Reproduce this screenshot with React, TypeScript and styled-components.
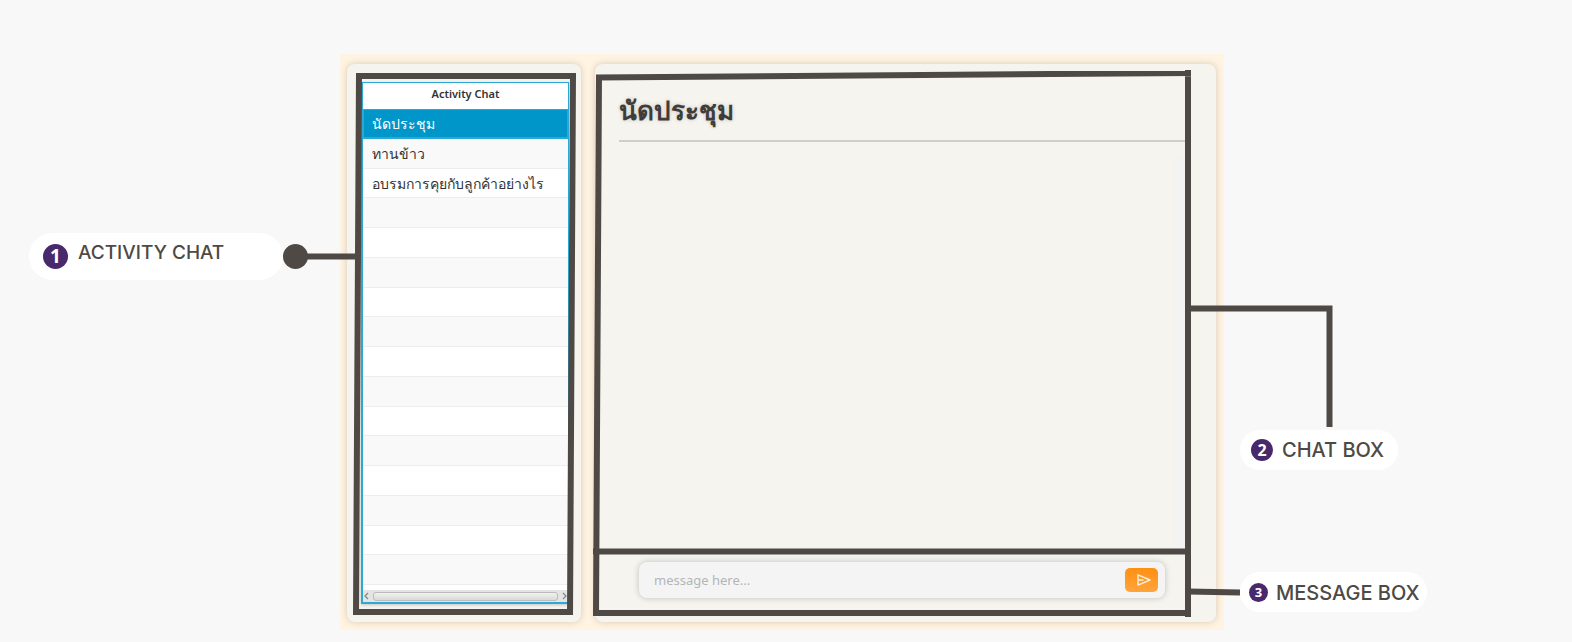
import React from "react";
import styled, { createGlobalStyle } from "styled-components";

const ink = "#4e4945";
const chats = ["นัดประชุม", "ทานข้าว", "อบรมการคุยกับลูกค้าอย่างไร"];
const ROWS = 16;

const Global = createGlobalStyle`
  * { box-sizing: border-box; }
  body { margin: 0; background: #f8f8f8; color: ${ink}; font-family: "Open Sans", "Noto Sans", sans-serif; }
`;

const Stage = styled.main`
  position: relative;
  display: grid;
  grid-template-columns: 340fr 884fr 348fr;
  padding: 54px 0 12px;
`;

const LeftNotes = styled.aside`
  padding: 179px 57px 0 29px;
`;

const RightNotes = styled.aside`
  display: flex;
  flex-direction: column;
  align-items: flex-start;
  justify-content: flex-end;
  gap: 102px;
  padding: 0 0 18px 16px;
`;

const Note = styled.p<{ $height: number; $pad: string; $gap: number }>`
  position: relative;
  z-index: 2;
  display: flex;
  align-items: center;
  gap: ${(p) => p.$gap}px;
  height: ${(p) => p.$height}px;
  margin: 0;
  padding: ${(p) => p.$pad};
  border-radius: 24px;
  background: #fff;
  white-space: nowrap;
`;

const Badge = styled.span<{ $size: number }>`
  display: grid;
  place-items: center;
  flex: none;
  width: ${(p) => p.$size}px;
  height: ${(p) => p.$size}px;
  border-radius: 50%;
  background: #48296c;
  color: #fff;
  font: 700 ${(p) => p.$size - 6}px/1 "Noto Sans", sans-serif;
`;

const NoteText = styled.span<{ $size?: number; $pad?: string }>`
  padding: ${(p) => p.$pad ?? "0"};
  font: 500 ${(p) => p.$size ?? 20}px/24px Inter, sans-serif;
`;

const Board = styled.section`
  display: grid;
  grid-template-columns: 234fr 621fr;
  gap: 14px;
  padding: 10px 8px 8px 7px;
  background: #fff3e1;
`;

const Card = styled.div`
  display: flex;
  flex-direction: column;
  min-width: 0;
  border-radius: 8px;
  background: #f5f4ef;
  box-shadow: 0 0 6px rgba(90, 80, 60, 0.25);
`;

const ListCard = styled(Card)`
  padding: 18px 12px 18px 14px;
`;

const ListBox = styled.div`
  border: solid #2ba9d4;
  border-width: 1px 1px 2px 2px;
  background: #fff;
  box-shadow: 0 1px 3px rgba(0, 0, 0, 0.2);
`;

const Table = styled.table`
  display: block;
  color: #333;
  thead, tr { display: block; }
  th {
    display: block;
    height: 26px;
    padding: 0;
    font: 600 11px/22px "Noto Sans", sans-serif;
    text-align: center;
  }
`;

const Rows = styled.tbody`
  display: grid;
  grid-template-rows: repeat(${ROWS}, 1fr);
  height: 476px;
`;

const Row = styled.tr<{ $active: boolean; $shade: boolean }>`
  && { display: flex; }
  align-items: center;
  border-bottom: 1px solid ${(p) => (p.$active ? "#2ba9d4" : "#ededed")};
  background: ${(p) => (p.$active ? "#0096c9" : p.$shade ? "#f9f9f9" : "#fff")};
  box-shadow: ${(p) => (p.$active ? "inset 0 0 0 1px #2ba9d4" : "none")};
  color: ${(p) => (p.$active ? "#fff" : "#333")};
  td {
    padding: 2px 0 0 9px;
    font-size: 14px;
    line-height: 24px;
    white-space: nowrap;
  }
`;

const ScrollBar = styled.div`
  display: flex;
  align-items: center;
  justify-content: space-between;
  height: 12px;
  margin-top: 5px;
  padding: 0 1px;
  background: #e4e4e4;
`;

const Thumb = styled.div`
  flex: 1;
  height: 9px;
  margin: 0 4px;
  border: 1px solid #bcbcbc;
  border-radius: 3px;
  background: linear-gradient(#f2f2f2, #d9d9d9);
`;

const ChatCard = styled(Card)`
  padding: 28px 31px 24px 24px;
`;

const Title = styled.h1`
  margin: 0;
  height: 50px;
  border-bottom: 2px solid #d0cfcb;
  color: #403c39;
  font-size: 26px;
  line-height: 36px;
  text-shadow: 0 0 4px rgba(0, 0, 0, 0.2);
`;

const Messages = styled.div`
  flex: 1;
  margin: 15px 0 12px;
  border-top: 1px solid #f9f2e6;
  border-right: 11px solid #f3f3f4;
`;

const Composer = styled.form`
  display: flex;
  align-items: center;
  height: 36px;
  margin: 0 20px;
  padding: 0 7px 0 15px;
  border-radius: 8px;
  background: #f4f4f4;
  box-shadow: 0 0 6px rgba(0, 0, 0, 0.22);
`;

const Field = styled.input`
  flex: 1;
  min-width: 0;
  padding: 0;
  border: 0;
  outline: 0;
  background: transparent;
  font: 13px/20px "Noto Sans", sans-serif;
  &::placeholder { color: #b4b4b4; opacity: 1; }
`;

const Send = styled.button`
  display: grid;
  place-items: center;
  width: 33px;
  height: 24px;
  padding: 0 0 0 4px;
  border: 0;
  border-radius: 5px;
  background: linear-gradient(#ff8f13, #ffa53c);
`;

const Lines = styled.svg`
  position: absolute;
  inset: 0;
  width: 100%;
  height: 100%;
  pointer-events: none;
`;

const Arrow = ({ d }: { d: string }) => (
  <svg width="5" height="8" viewBox="0 0 5 8" fill="none" stroke="#888" strokeWidth="1.3"><path d={d} /></svg>
);

export default function App() {
  return (
    <>
      <Global />
      <Stage>
        <LeftNotes>
          <Note $height={47} $pad="0 14px" $gap={10}>
            <Badge $size={25}>1</Badge>
            <NoteText $size={19} $pad="0 0 8px">ACTIVITY CHAT</NoteText>
          </Note>
        </LeftNotes>
        <Board>
          <ListCard>
            <ListBox>
              <Table>
                <thead><tr><th scope="col">Activity Chat</th></tr></thead>
                <Rows>
                  {Array.from({ length: ROWS }, (_, i) => (
                    <Row key={i} $active={i === 0} $shade={i % 2 === 1}><td>{chats[i]}</td></Row>
                  ))}
                </Rows>
              </Table>
              <ScrollBar>
                <Arrow d="M4 1 1 4l3 3" />
                <Thumb />
                <Arrow d="m1 1 3 3-3 3" />
              </ScrollBar>
            </ListBox>
          </ListCard>
          <ChatCard>
            <Title>นัดประชุม</Title>
            <Messages />
            <Composer onSubmit={(e) => e.preventDefault()}>
              <Field aria-label="Message" placeholder="message here..." />
              <Send aria-label="Send">
                <svg width="14" height="12" viewBox="0 0 14 12" fill="none" stroke="#fff0dc" strokeWidth="1.4" strokeLinejoin="round">
                  <path d="M1 .8 13 6 1 11.2V6zM1 6h5.5" />
                </svg>
              </Send>
            </Composer>
          </ChatCard>
        </Board>
        <RightNotes>
          <Note $height={40} $pad="0 14px 0 11px" $gap={9}>
            <Badge $size={22}>2</Badge>
            <NoteText>CHAT BOX</NoteText>
          </Note>
          <Note $height={40} $pad="0 7px 0 9px" $gap={8}>
            <Badge $size={19}>3</Badge>
            <NoteText $pad="2px 0 0">MESSAGE BOX</NoteText>
          </Note>
        </RightNotes>
        <Lines viewBox="0 0 1572 642" preserveAspectRatio="none" fill="none" stroke={ink} strokeWidth="6" aria-hidden="true">
          <path d="M356 76H576M359 73 356 615M573 73 570 615M353 612H573" />
          <path d="M596 77.500 1191 73M599 75 596 616M1188 70V617M593 551.500H1188M593 613H1188" />
          <path d="M300 256.500H357M1188 308.500H1329.500M1329.500 305.500V427M1188 591.500 1240 592.500" />
          <circle cx="295.500" cy="256.500" r="12.500" fill={ink} stroke="none" />
        </Lines>
      </Stage>
    </>
  );
}
